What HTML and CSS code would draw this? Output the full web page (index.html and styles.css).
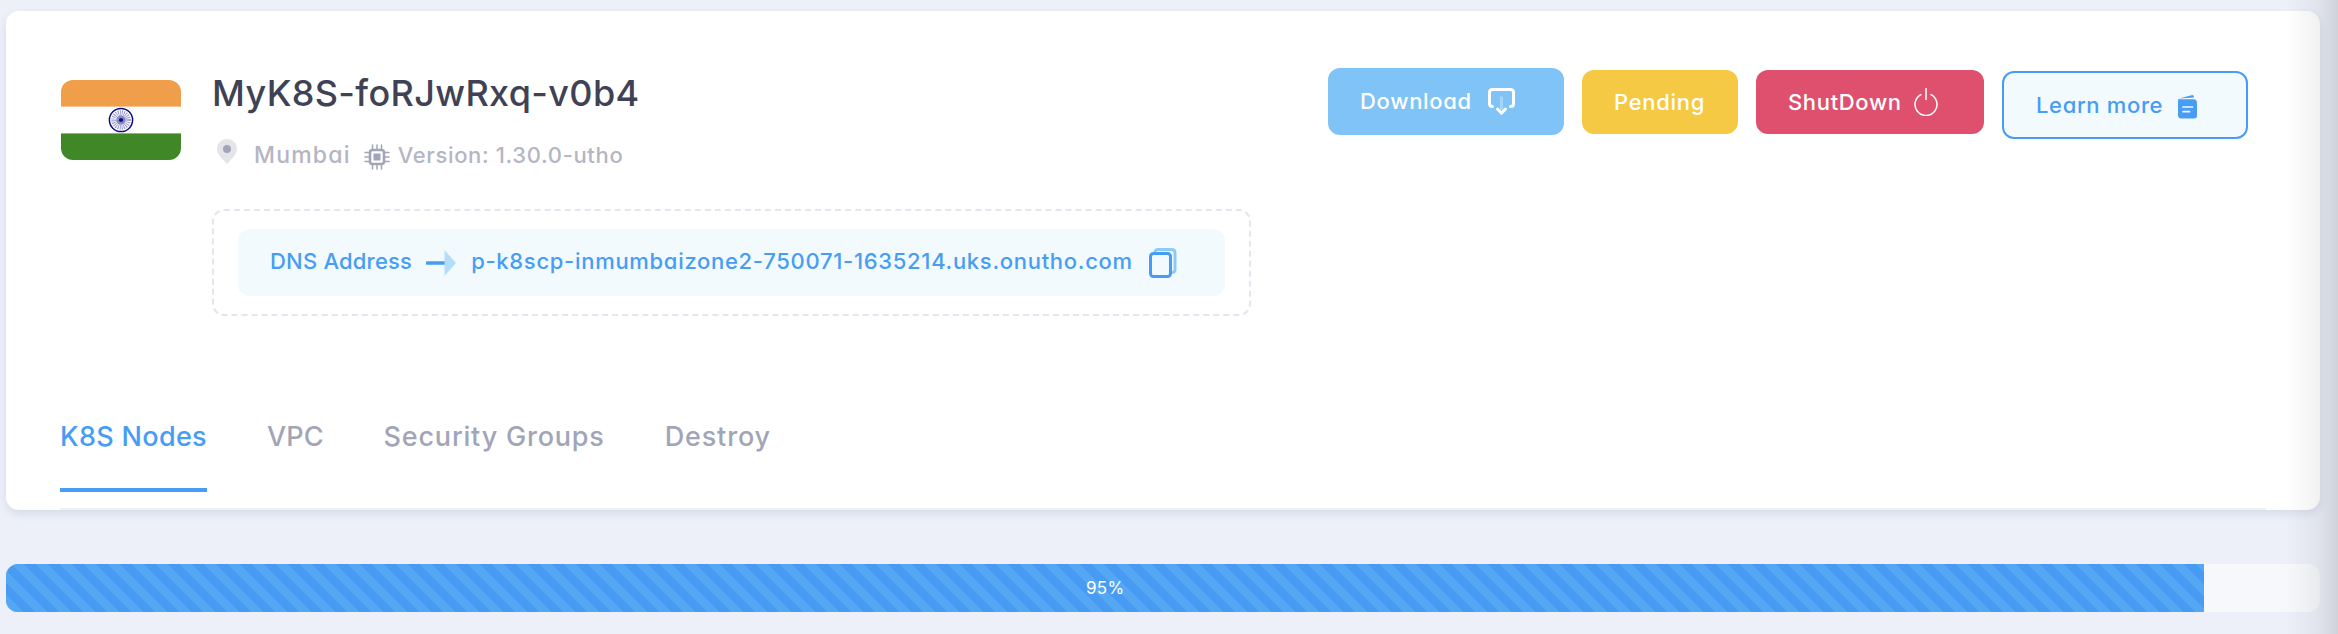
FILE: index.html
```html
<!DOCTYPE html>
<html lang="en">
<head>
<meta charset="utf-8">
<title>MyK8S-foRJwRxq-v0b4</title>
<link rel="stylesheet" href="styles.css">
</head>
<body>
<main class="page">
  <section class="card">
    <header class="summary">
      <svg class="flag" viewBox="0 0 120 80">
        <rect width="120" height="80" fill="#fff"/>
        <rect width="120" height="26.6" fill="#f19e4a"/>
        <rect y="53.4" width="120" height="26.6" fill="#3f8727"/>
        <circle cx="60" cy="40" r="11.6" fill="none" stroke="#0b0b88" stroke-width="1.5"/>
        <circle cx="60" cy="40" r="5.8" fill="none" stroke="#0b0b88" stroke-width="8" stroke-dasharray=".7 .818" opacity=".45"/>
        <circle cx="60" cy="40" r="4.500" fill="#0b0b88" opacity=".35"/>
        <circle cx="60" cy="40" r="2.1" fill="#0b0b88"/>
      </svg>
      <div class="details">
        <h1 class="title"><span class="t-title">MyK8S-foRJwRxq-v0b4</span></h1>
        <div class="meta">
          <svg class="pin" viewBox="0 0 20 25"><path d="M10 0C4.300 0 0 4.400 0 9.900C0 16 6.500 20.500 10 25C13.500 20.500 20 16 20 9.900C20 4.400 15.700 0 10 0Z" fill="#e3e5e9"/><circle cx="10" cy="10" r="4" fill="#a1a5b7"/></svg>
          <span class="t-city">Mumbai</span>
          <svg class="chip" viewBox="0 0 26 26" fill="none" stroke="#a1a5b7"><path d="M8.500 1V6M13 1V6M17.500 1V6M8.500 20V25M13 20V25M17.500 20V25M1 8.500H6M1 13H6M1 17.500H6M20 8.500H25M20 13H25M20 17.500H25" stroke-width="1.500" stroke-linecap="round"/><rect x="6" y="6" width="14" height="14" rx="2.500" stroke-width="2.600"/><rect x="9.500" y="9.500" width="7" height="7" fill="#a1a5b7" stroke="none"/></svg>
          <span class="t-version">Version: 1.30.0-utho</span>
        </div>
        <div class="dns-frame">
          <div class="dns">
            <span class="t-dns">DNS Address</span>
            <svg class="arrow" viewBox="0 0 30 26"><path d="M1.500 13H19" stroke="#479df4" stroke-width="3.600" stroke-linecap="round"/><path d="M18.500 0L30 13L18.500 26Z" fill="#b2defb"/></svg>
            <span class="t-host">p-k8scp-inmumbaizone2-750071-1635214.uks.onutho.com</span>
            <svg class="copy" viewBox="0 0 28 30" fill="none" stroke-width="3"><path d="M6 4Q6.500 1.500 9 1.500H22.500Q26 1.500 26 5V21.500Q26 24.500 22.500 24.500" stroke="#8ccbf8"/><rect x="1.500" y="5.500" width="20" height="23" rx="3" stroke="#479df4"/></svg>
          </div>
        </div>
      </div>
      <div class="actions">
        <a class="btn download"><span class="t-download">Download</span><svg class="i-download" viewBox="0 0 27 27" fill="none" stroke="#fff" stroke-width="3" stroke-linecap="round"><path d="M4.500 18.500Q1.500 18.500 1.500 15.500V4.500Q1.500 1.500 4.500 1.500H22.500Q25.500 1.500 25.500 4.500V15.500Q25.500 18.500 22.500 18.500M9.500 21L13.500 25.200L17.500 21" stroke-linejoin="round"/><path d="M13.500 8.500V22" stroke-opacity=".3" stroke-linecap="butt"/></svg></a>
        <a class="btn pending"><span class="t-pending">Pending</span></a>
        <a class="btn shutdown"><span class="t-shutdown">ShutDown</span><svg class="i-power" viewBox="0 0 24 28" fill="none" stroke="#fff" stroke-width="1.500"><path d="M7.500 6.400A11 11 0 1 0 16.500 6.400M12 0V12"/></svg></a>
        <a class="btn learn"><span class="t-learn">Learn more</span><svg class="i-doc" viewBox="0 0 19 24"><path d="M1 3.400L14.500 .1Q16 0 16 2.600Z" fill="#479df4"/><path d="M0 4.200H15.500Q19 4.500 19 8V20.500Q19 23.500 16 23.500H3.500Q0 23.500 0 20Z" fill="#479df4"/><path d="M5 12H14.500M5 16.700H11.500" stroke="#f1f9fe" stroke-width="1.700" stroke-linecap="round"/></svg></a>
      </div>
    </header>
    <nav class="tabs">
      <a class="tab active"><span class="t-nodes">K8S Nodes</span></a>
      <a class="tab"><span class="t-vpc">VPC</span></a>
      <a class="tab"><span class="t-sec">Security Groups</span></a>
      <a class="tab"><span class="t-destroy">Destroy</span></a>
    </nav>
  </section>
  <div class="progress"><div class="bar" style="width:95%"><span class="t-pct">95%</span></div></div>
</main>
</body>
</html>
```
FILE: styles.css
```css
* { box-sizing: border-box; }
body { margin: 0; height: 634px; overflow: hidden; background: #edf0f9; font-family: Inter, "Open Sans", sans-serif; font-weight: 500; font-size: 22px; font-feature-settings: "cv11", "calt" 0; }
svg { display: block; flex: none; }
span { white-space: nowrap; }
.page { height: 634px; padding: 11px 18px 0 6px; }
.page::after { content: ""; position: absolute; top: 0; right: 0; width: 52px; height: 634px; background: linear-gradient(90deg, rgba(0,0,0,0), rgba(0,0,0,.05) 60%, rgba(0,0,0,.12)); }
.card { display: flex; flex-direction: column; height: 499px; background: #fff; border-radius: 13px; box-shadow: 0 4px 8px rgba(50,70,120,.12); }
.summary { display: flex; align-items: flex-start; height: 365px; padding: 0 72px 0 55px; }
.flag { width: 120px; height: 80px; margin-top: 69px; border-radius: 12px; }
.details { width: 1039px; margin-left: 31px; padding-top: 60px; }
.title { margin: 0; height: 44px; line-height: 44px; font-size: 36px; font-weight: 500; color: #3f4254; }
.meta { display: flex; height: 32px; margin-top: 24px; line-height: 32px; color: #b5b5c3; }
.pin { width: 20px; height: 25px; margin: 0 17px 0 5px; }
.chip { width: 26px; height: 26px; margin: 5px 8px 0 13px; }
.dns-frame { height: 107px; margin-top: 38px; padding: 18px 24px; border: 2px dashed #e4e6ef; border-radius: 12px; }
.dns { display: flex; align-items: center; height: 67px; padding-left: 32px; border-radius: 12px; background: #f2fafd; color: #479df4; }
.dns span { padding-bottom: 3px; }
.arrow { width: 30px; height: 26px; margin: 0 15px 0 14px; }
.copy { width: 28px; height: 30px; margin-left: 16px; }
.actions { display: flex; margin: 57px 0 0 auto; gap: 18px; }
.btn { display: flex; align-items: center; height: 64px; margin-top: 2px; padding-left: 32px; border-radius: 12px; color: #fff; }
.download { width: 236px; height: 67px; margin-top: 0; padding-bottom: 2px; background: #7fc3f7; }
.pending { width: 156px; background: #f5c944; }
.shutdown { width: 228px; background: #df506e; }
.learn { width: 246px; height: 68px; margin-top: 3px; border: 2px solid #479df4; background: #f2fafd; color: #479df4; }
.i-download { width: 27px; height: 27px; margin: 2px 0 0 16px; }
.i-power { width: 24px; height: 28px; margin-left: 12px; }
.i-doc { width: 19px; height: 24px; margin: 4px 0 0 15px; }
.tabs { display: flex; height: 134px; margin: 0 54px; border-bottom: 2px solid #eff2f5; gap: 60px; }
.tab { height: 116px; padding-top: 41px; line-height: 40px; font-size: 27px; color: #a1a5b7; }
.tab.active { color: #479df4; border-bottom: 4px solid #479df4; }
.progress { height: 48px; margin-top: 54px; overflow: hidden; border-radius: 12px; background: #f6f8fb; }
.bar { display: flex; align-items: center; justify-content: center; height: 48px; color: #fff; font-size: 17px; font-weight: 400; background: linear-gradient(45deg, #55a7f4 25%, transparent 25%, transparent 50%, #55a7f4 50%, #55a7f4 75%, transparent 75%) 6px 0 / 24px 24px #479bf2; }

/* Tracking per label */
.t-title { letter-spacing: .35px; }
.t-city { font-size: 23px; letter-spacing: 1.2px; }
.t-version { letter-spacing: .65px; }
.t-dns { letter-spacing: .2px; }
.t-host { letter-spacing: .7px; }
.t-download { letter-spacing: .7px; }
.t-pending { letter-spacing: .7px; }
.t-shutdown { letter-spacing: .65px; }
.t-learn { letter-spacing: .65px; }
.t-nodes { letter-spacing: .33px; }
.t-vpc { letter-spacing: .1px; }
.t-sec { letter-spacing: .8px; }
.t-destroy { letter-spacing: .85px; }
.t-pct { letter-spacing: .3px; }
```
